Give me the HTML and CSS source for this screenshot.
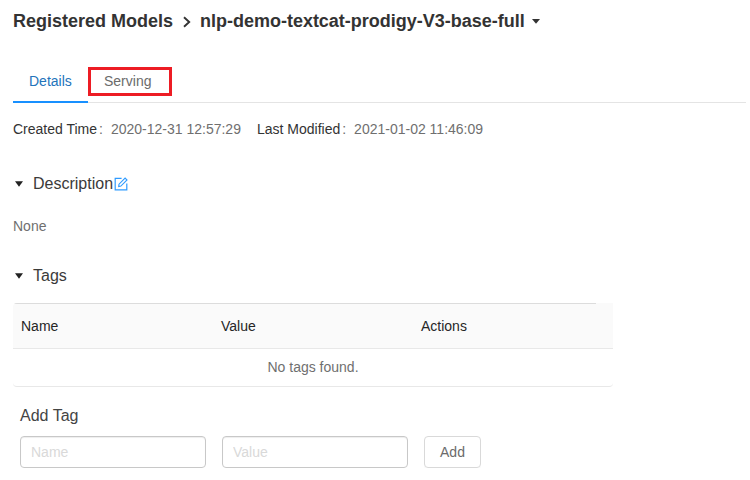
FILE: index.html
```html
<!DOCTYPE html>
<html lang="en">
<head>
<meta charset="utf-8">
<title>Registered Models</title>
<link rel="stylesheet" href="styles.css">
</head>
<body>
<main class="page">
  <h1 class="breadcrumb">
    <span class="crumb-root">Registered Models</span>
    <svg class="chevron" width="8" height="12" viewBox="0 0 8 12"><path d="M1 1.2 6.2 6 1 10.8" fill="none" stroke="#333" stroke-width="1.9"/></svg>
    <span class="crumb-model">nlp-demo-textcat-prodigy-V3-base-full</span>
    <svg class="title-caret" width="8" height="5" viewBox="0 0 8 5"><path d="M0 0h8L4 4.8z" fill="#333"/></svg>
  </h1>
  <nav class="tabs">
    <a class="tab active">Details</a>
    <a class="tab highlighted">Serving</a>
  </nav>
  <dl class="meta">
    <dt>Created Time</dt><dd>2020-12-31 12:57:29</dd>
    <dt>Last Modified</dt><dd>2021-01-02 11:46:09</dd>
  </dl>
  <section>
    <h2 class="section-title">
      <svg class="caret" width="8" height="6" viewBox="0 0 8 6"><path d="M0 .2h8L4 5.8z" fill="#222"/></svg>
      <span>Description</span>
      <svg class="edit" width="14" height="14" viewBox="0 0 14 14" fill="none" stroke="#2f9bff"><path d="M7.6 1.3H1.2v11.5h11.6V6.6" stroke-width="1.2"/><path d="M4.7 9.5 5 7.2 11.1 1.1 13 3 6.9 9.1z" stroke-width="1.1"/></svg>
    </h2>
    <p class="description">None</p>
  </section>
  <section>
    <h2 class="section-title">
      <svg class="caret" width="8" height="6" viewBox="0 0 8 6"><path d="M0 .2h8L4 5.8z" fill="#222"/></svg>
      <span>Tags</span>
    </h2>
    <div class="tags">
      <div class="tags-head"><span>Name</span><span>Value</span><span>Actions</span></div>
      <div class="tags-empty">No tags found.</div>
    </div>
  </section>
  <form class="add-tag">
    <h3 class="add-title">Add Tag</h3>
    <div class="fields">
      <input class="field" type="text" placeholder="Name">
      <input class="field" type="text" placeholder="Value">
      <button class="add-button" type="button">Add</button>
    </div>
  </form>
</main>
</body>
</html>
```
FILE: styles.css
```css
* { box-sizing: border-box; }
body {
  margin: 0;
  background: #fff;
  color: #6f6f6f;
  font: 14px/20px "Liberation Sans", Arial, sans-serif;
}
h1, h2, h3, p, dl, dd { margin: 0; }
svg { display: block; flex: none; }
.page { padding: 10px 4px 0 13px; }

.breadcrumb {
  display: flex;
  align-items: center;
  height: 22px;
  color: #333;
  font-size: 18px;
  line-height: 22px;
  white-space: nowrap;
}
.crumb-root { width: 160px; }
.chevron { margin: 1px 8px 0 10px; }
.crumb-model { width: 325px; margin-left: 1px; letter-spacing: -0.01px; }
.title-caret { margin-left: 6.5px; }

.tabs {
  display: flex;
  height: 36px;
  margin-top: 35px;
  border-bottom: 1px solid #e4e4e4;
}
.tab { height: 29px; padding: 0 16px; line-height: 29px; color: #6b6b6b; }
.tab.active {
  width: 75px;
  height: 36px;
  color: #2374bb;
  border-bottom: 2px solid #1890ff;
}
.tab.highlighted {
  width: 84px;
  padding: 0 13px;
  border: 3px solid #ed1c24;
  line-height: 23px;
}

.meta { display: flex; height: 20px; margin-top: 16px; white-space: nowrap; }
.meta dt { color: #333; }
.meta dt::after { content: ":"; margin: 0 8px 0 2px; color: #6b6b6b; }
.meta dd { margin-right: 16px; }

.section-title {
  display: flex;
  align-items: center;
  height: 24px;
  color: #3a3a3a;
  font-size: 16px;
  font-weight: 400;
  line-height: 24px;
}
.meta + section { margin-top: 32px; }
.caret { margin: 1px 10px 0 2px; }
.edit { margin: 1px 0 0 1px; }
.description { height: 20px; margin: 21px 0 27px; }
.caret + span { padding-top: 2px; }

.tags { width: 600px; margin-top: 16px; border-bottom: 1px solid #e8e8e8; border-radius: 0 0 4px 4px; }
.tags-head {
  display: grid;
  grid-template-columns: repeat(3, 200px);
  height: 46px;
  padding-left: 8px;
  background: linear-gradient(#dcdcdc, #dcdcdc) 0 0 / 583px 1px no-repeat #fafafa;
  border-bottom: 1px solid #e8e8e8;
  border-radius: 4px 0 0 0;
  color: #262626;
  line-height: 46px;
}
.tags-empty { height: 37px; line-height: 37px; text-align: center; }

.add-tag { margin: 17px 0 0 7px; }
.add-title { height: 24px; color: #444; font-size: 16px; font-weight: 400; line-height: 24px; }
.fields { display: flex; gap: 16px; margin-top: 8px; }
.field, .add-button {
  height: 32px;
  border-radius: 4px;
  background: #fff;
  font: inherit;
}
.field { width: 186px; padding: 0 10px; border: 1px solid #c8c8c8; box-shadow: inset 0 1px 1px #eee; }
.field::placeholder { color: #d9d9d9; opacity: 1; }
.add-button {
  width: 57px;
  padding: 0;
  border: 1px solid #d9d9d9;
  box-shadow: 0 2px 0 rgba(0, 0, 0, 0.015);
  color: #6b6b6b;
}
```
